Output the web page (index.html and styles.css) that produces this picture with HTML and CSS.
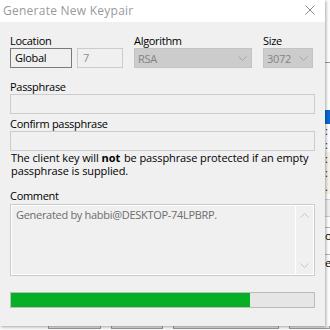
FILE: index.html
```html
<!DOCTYPE html>
<html lang="en">
<head>
  <meta charset="UTF-8">
  <meta name="viewport" content="width=device-width, initial-scale=1.0">
  <title>Generate New Keypair</title>
  <link rel="stylesheet" href="styles.css">
</head>
<body>
  <div class="desktop">
    <div class="window">
      <div class="titlebar">
        <span class="title">Generate New Keypair</span>
        <svg class="close" width="10" height="10" viewBox="0 0 10 10">
          <path d="M0.5 0.5 L9.5 9.5 M9.5 0.5 L0.5 9.5" stroke="#8c8c8c" stroke-width="1" fill="none"/>
        </svg>
      </div>
      <div class="content">
        <div class="top-row">
          <div class="field">
            <div class="label">Location</div>
            <div class="pair">
              <div class="box box-active">Global</div>
              <div class="box box-disabled">7</div>
            </div>
          </div>
          <div class="field">
            <div class="label">Algorithm</div>
            <div class="combo">
              <span>RSA</span>
              <svg width="9" height="5" viewBox="0 0 9 5"><path d="M0.5 0.5 L4.5 4.5 L8.5 0.5" stroke="#a6a6a6" fill="none"/></svg>
            </div>
          </div>
          <div class="field">
            <div class="label">Size</div>
            <div class="combo">
              <span>3072</span>
              <svg width="9" height="5" viewBox="0 0 9 5"><path d="M0.5 0.5 L4.5 4.5 L8.5 0.5" stroke="#a6a6a6" fill="none"/></svg>
            </div>
          </div>
        </div>

        <div class="label label-gap">Passphrase</div>
        <div class="input"></div>

        <div class="label label-tight">Confirm passphrase</div>
        <div class="input"></div>

        <p class="note">The client key will <strong>not</strong> be passphrase protected if an empty passphrase is supplied.</p>

        <div class="label">Comment</div>
        <div class="textarea">
          <div class="text">Generated by habbi@DESKTOP-74LPBRP.</div>
          <div class="scrollbar">
            <svg width="9" height="5" viewBox="0 0 9 5"><path d="M0.5 4.5 L4.5 0.5 L8.5 4.5" stroke="#c4c4c4" fill="none"/></svg>
            <svg width="9" height="5" viewBox="0 0 9 5"><path d="M0.5 0.5 L4.5 4.5 L8.5 0.5" stroke="#c4c4c4" fill="none"/></svg>
          </div>
        </div>

        <div class="progress">
          <div class="progress-fill" style="width: 79%;"></div>
        </div>
      </div>
    </div>

    <div class="behind">
      <div class="behind-line"></div>
      <div class="behind-select"></div>
      <div class="behind-row">:</div>
      <div class="behind-row">:</div>
      <div class="behind-row alt">:</div>
      <div class="behind-row alt">:</div>
      <div class="behind-row alt">.</div>
      <div class="behind-head"></div>
      <div class="behind-btn">o</div>
      <div class="behind-btn">e</div>
    </div>
  </div>

  <div class="behind-bottom">
    <div class="ghost-btn b1"></div>
    <div class="ghost-btn b2"></div>
    <div class="ghost-btn b3"></div>
    <div class="ghost-btn b4"></div>
  </div>
</body>
</html>
```

FILE: styles.css
```css
body {
  margin: 0;
  padding: 0;
  background: #ffffff;
  font-family: "Open Sans", "Liberation Sans", sans-serif;
  font-size: 11px;
  letter-spacing: -0.3px;
  color: #000;
  overflow: hidden;
}
.desktop {
  display: flex;
  height: 326px;
}
.window {
  width: 325px;
  flex-shrink: 0;
  background: #f0f0f0;
  box-shadow: 1px 1px 3px rgba(0, 0, 0, 0.35);
  position: relative;
  z-index: 1;
  display: flex;
  flex-direction: column;
}
.titlebar {
  height: 22px;
  background: #fff;
  display: flex;
  align-items: center;
  justify-content: space-between;
  padding: 0 10px 0 3px;
}
.title {
  color: #999;
  font-size: 12px;
  letter-spacing: 0.25px;
  margin-top: -2px;
}
.close {
  margin-top: -2px;
}
.content {
  padding: 11px 10px 0 10px;
}
.label {
  height: 15px;
  line-height: 15px;
}
.top-row {
  display: grid;
  grid-template-columns: 113px 118px 50px;
  column-gap: 11px;
}
.pair {
  display: flex;
  gap: 5px;
}
.box {
  height: 20px;
  box-sizing: border-box;
  line-height: 18px;
}
.box-active {
  width: 62px;
  padding-left: 4px;
  border: 1px solid #7a7a7a;
  background: #f0f0f0;
}
.box-disabled {
  width: 46px;
  padding-left: 5px;
  border: 1px solid #cccccc;
  color: #8d8d8d;
}
.combo {
  height: 20px;
  box-sizing: border-box;
  background: #cccccc;
  border: 1px solid #c4c4c4;
  color: #838383;
  display: flex;
  align-items: center;
  justify-content: space-between;
  padding: 0 4px 0 3px;
}
.label-gap {
  margin-top: 11px;
}
.label-tight {
  margin-top: 2px;
}
.input {
  height: 20px;
  box-sizing: border-box;
  border: 1px solid #cccccc;
}
.note {
  margin: 0 0 11px 1px;
  line-height: 13px;
  letter-spacing: -0.1px;
}
.note strong {
  display: inline-block;
  line-height: 13px;
  letter-spacing: 0;
  margin-right: 1px;
}
.textarea {
  margin-top: 1px;
  height: 72px;
  box-sizing: border-box;
  border: 1px solid #cccccc;
  display: flex;
}
.textarea .text {
  flex: 1;
  border: 1px solid #fff;
  border-right: none;
  color: #6d6d6d;
  padding: 1px 4px;
}
.scrollbar {
  width: 17px;
  border: 1px solid #fff;
  display: flex;
  flex-direction: column;
  justify-content: space-between;
  align-items: center;
  padding: 7px 0 6px;
}
.progress {
  margin-top: 16px;
  height: 16px;
  box-sizing: border-box;
  border: 1px solid #bcbcbc;
  background: #e6e6e6;
}
.progress-fill {
  height: 100%;
  background: #06b025;
}
.behind {
  flex: 1;
  display: flex;
  flex-direction: column;
  background: #fdfdfd;
  overflow: hidden;
}
.behind-line {
  margin-top: 62px;
  height: 1px;
  background: #9a9a9a;
}
.behind-select {
  margin-top: 47px;
  height: 14px;
  background: #0a6ad0;
}
.behind-row {
  height: 14px;
  line-height: 14px;
  color: #001e6e;
}
.behind-row.alt {
  background: #f7f3e6;
}
.behind-head {
  margin-top: 5px;
  height: 16px;
  border-top: 1px solid #cfcfcf;
  border-bottom: 1px solid #cfcfcf;
  background: #f0f0f0;
}
.behind-btn {
  margin-top: 10px;
  height: 16px;
  line-height: 16px;
  border-top: 1px solid #b5b5b5;
}
.behind-bottom {
  height: 4px;
  display: flex;
  background: #fafafa;
}
.ghost-btn {
  height: 2px;
  border: 1px solid #9a9a9a;
  border-top: none;
  background: #e1e1e1;
}
.b1 { margin-left: 48px; width: 52px; }
.b2 { margin-left: 10px; width: 52px; }
.b3 { margin-left: 10px; width: 107px; }
.b4 { margin-left: 10px; width: 40px; }
```
